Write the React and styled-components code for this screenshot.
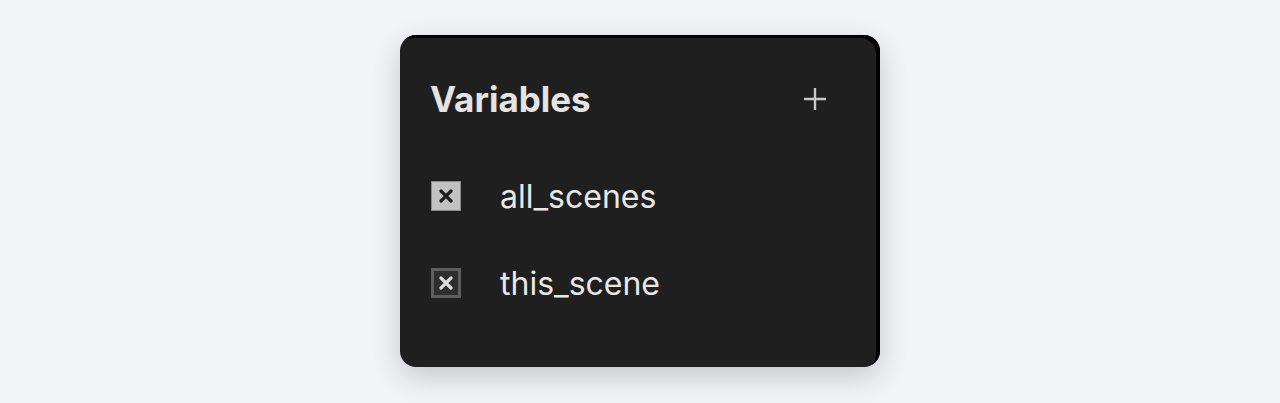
import React from "react";
import styled, { createGlobalStyle } from "styled-components";

const Global = createGlobalStyle`
  html, body {
    margin: 0;
    padding: 0;
    background: #f2f3f7;
    font-family: Inter, "Noto Sans", sans-serif;
  }
`;

const Page = styled.div`
  display: flex;
  justify-content: center;
  padding-top: 35px;
  height: 403px;
  box-sizing: border-box;
`;

const Card = styled.section`
  width: 480px;
  height: 332px;
  box-sizing: border-box;
  background: #1f1f1f;
  border-radius: 16px;
  box-shadow: inset -4px 3px 0 #000, 0 10px 28px rgba(0, 0, 0, 0.18);
  padding: 42px 53px 0 30px;
  color: #e6e6e6;
`;

const Header = styled.header`
  display: flex;
  align-items: center;
  justify-content: space-between;
  height: 44px;
`;

const Title = styled.h2`
  margin: 0;
  font-size: 35px;
  font-weight: 700;
  color: #e4e4e4;
`;

const AddButton = styled.button`
  border: none;
  background: none;
  padding: 0;
  width: 24px;
  height: 24px;
  display: flex;
  align-items: center;
  justify-content: center;
  cursor: pointer;
`;

const List = styled.ul`
  list-style: none;
  margin: 60px 0 0 1px;
  padding: 0;
  display: flex;
  flex-direction: column;
  gap: 57px;
`;

const Row = styled.li`
  display: flex;
  align-items: center;
  gap: 39px;
  height: 30px;
`;

const Box = styled.span`
  width: 30px;
  height: 30px;
  flex: none;
  box-sizing: border-box;
  display: flex;
  align-items: center;
  justify-content: center;
  background: ${(p) => (p.$filled ? "#c2c2c2" : "#2e2e2e")};
  border: ${(p) => (p.$filled ? "1px solid #8a8a8a" : "3px solid #5e5e5e")};
  color: ${(p) => (p.$filled ? "#1e1e1e" : "#dcdcdc")};
`;

const Label = styled.span`
  font-size: 32px;
  color: #e8e8e8;
`;

const Cross = () => (
  <svg width="14" height="14" viewBox="0 0 14 14">
    <path d="M2 2 L12 12 M12 2 L2 12" stroke="currentColor" strokeWidth="3.2" strokeLinecap="round" />
  </svg>
);

const vars = [
  { name: "all_scenes", filled: true },
  { name: "this_scene", filled: false },
];

export default function App() {
  return (
    <>
      <Global />
      <Page>
        <Card>
          <Header>
            <Title>Variables</Title>
            <AddButton aria-label="Add variable">
              <svg width="24" height="24" viewBox="0 0 24 24">
                <path d="M12 1 V23 M1 12 H23" stroke="#c8c8c8" strokeWidth="2.4" />
              </svg>
            </AddButton>
          </Header>
          <List>
            {vars.map((v) => (
              <Row key={v.name}>
                <Box $filled={v.filled}>
                  <Cross />
                </Box>
                <Label>{v.name}</Label>
              </Row>
            ))}
          </List>
        </Card>
      </Page>
    </>
  );
}
